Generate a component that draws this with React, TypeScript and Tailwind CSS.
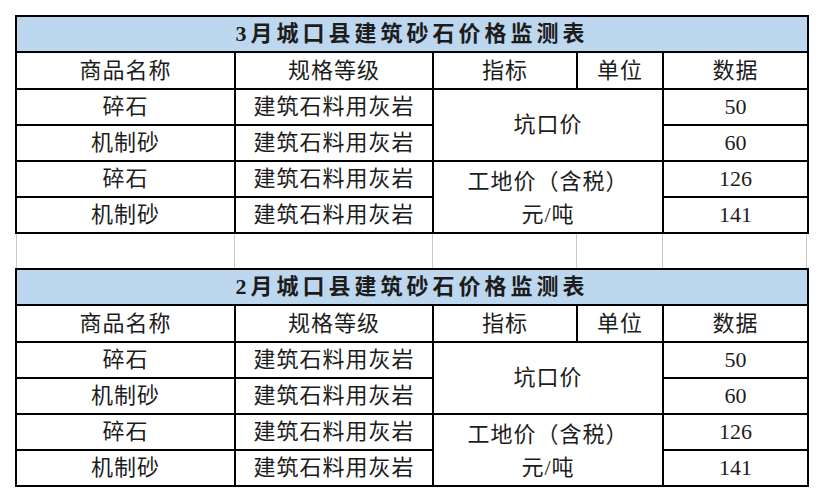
import React from "react";

const FONT = { fontFamily: '"Liberation Serif", "Noto Sans CJK SC", serif' };

const rows = [
  { name: "碎石", spec: "建筑石料用灰岩", value: "50" },
  { name: "机制砂", spec: "建筑石料用灰岩", value: "60" },
  { name: "碎石", spec: "建筑石料用灰岩", value: "126" },
  { name: "机制砂", spec: "建筑石料用灰岩", value: "141" },
];

const cell = "border-2 border-black text-center align-middle p-0";

function PriceTable({ month }: { month: string }) {
  return (
    <table className="table-fixed border-collapse w-[792px] text-[22px] text-[#1c1c1c] leading-none">
      <colgroup>
        <col className="w-[219px]" />
        <col className="w-[198px]" />
        <col className="w-[144px]" />
        <col className="w-[86px]" />
        <col className="w-[145px]" />
      </colgroup>
      <tbody>
        <tr className="h-[36px]">
          <td colSpan={5} className={`${cell} bg-[#bdd7ee] font-bold tracking-[4px]`}>
            {month}月城口县建筑砂石价格监测表
          </td>
        </tr>
        <tr className="h-[37px]">
          <td className={`${cell} tracking-[1px]`}>商品名称</td>
          <td className={`${cell} tracking-[1px]`}>规格等级</td>
          <td className={`${cell} tracking-[1px]`}>指标</td>
          <td className={`${cell} tracking-[1px]`}>单位</td>
          <td className={`${cell} tracking-[1px]`}>数据</td>
        </tr>
        {rows.map((r, i) => (
          <tr key={i} className="h-[36px]">
            <td className={`${cell} tracking-[1px]`}>{r.name}</td>
            <td className={`${cell} tracking-[1px]`}>{r.spec}</td>
            {i === 0 && (
              <td colSpan={2} rowSpan={2} className={`${cell} tracking-[1px]`}>
                坑口价
              </td>
            )}
            {i === 2 && (
              <td colSpan={2} rowSpan={2} className={`${cell} tracking-[1px]`}>
                <div className="flex flex-col items-center gap-[11px] pt-[2px]">
                  <span>工地价（含税）</span>
                  <span>元/吨</span>
                </div>
              </td>
            )}
            <td className={cell}>{r.value}</td>
          </tr>
        ))}
      </tbody>
    </table>
  );
}

export default function App() {
  return (
    <div className="w-[822px] h-[500px] bg-white overflow-hidden pl-[15px] pt-[15px]" style={FONT}>
      <PriceTable month="3" />
      <div className="grid grid-cols-[219px_198px_144px_86px_145px] w-[792px] h-[34px]">
        <div className="border-l border-[#c8c8c8] ml-[1px]" />
        <div className="border-l border-[#c8c8c8]" />
        <div className="border-l border-[#c8c8c8]" />
        <div className="border-l border-[#c8c8c8]" />
        <div className="border-x border-[#c8c8c8]" />
      </div>
      <PriceTable month="2" />
    </div>
  );
}
